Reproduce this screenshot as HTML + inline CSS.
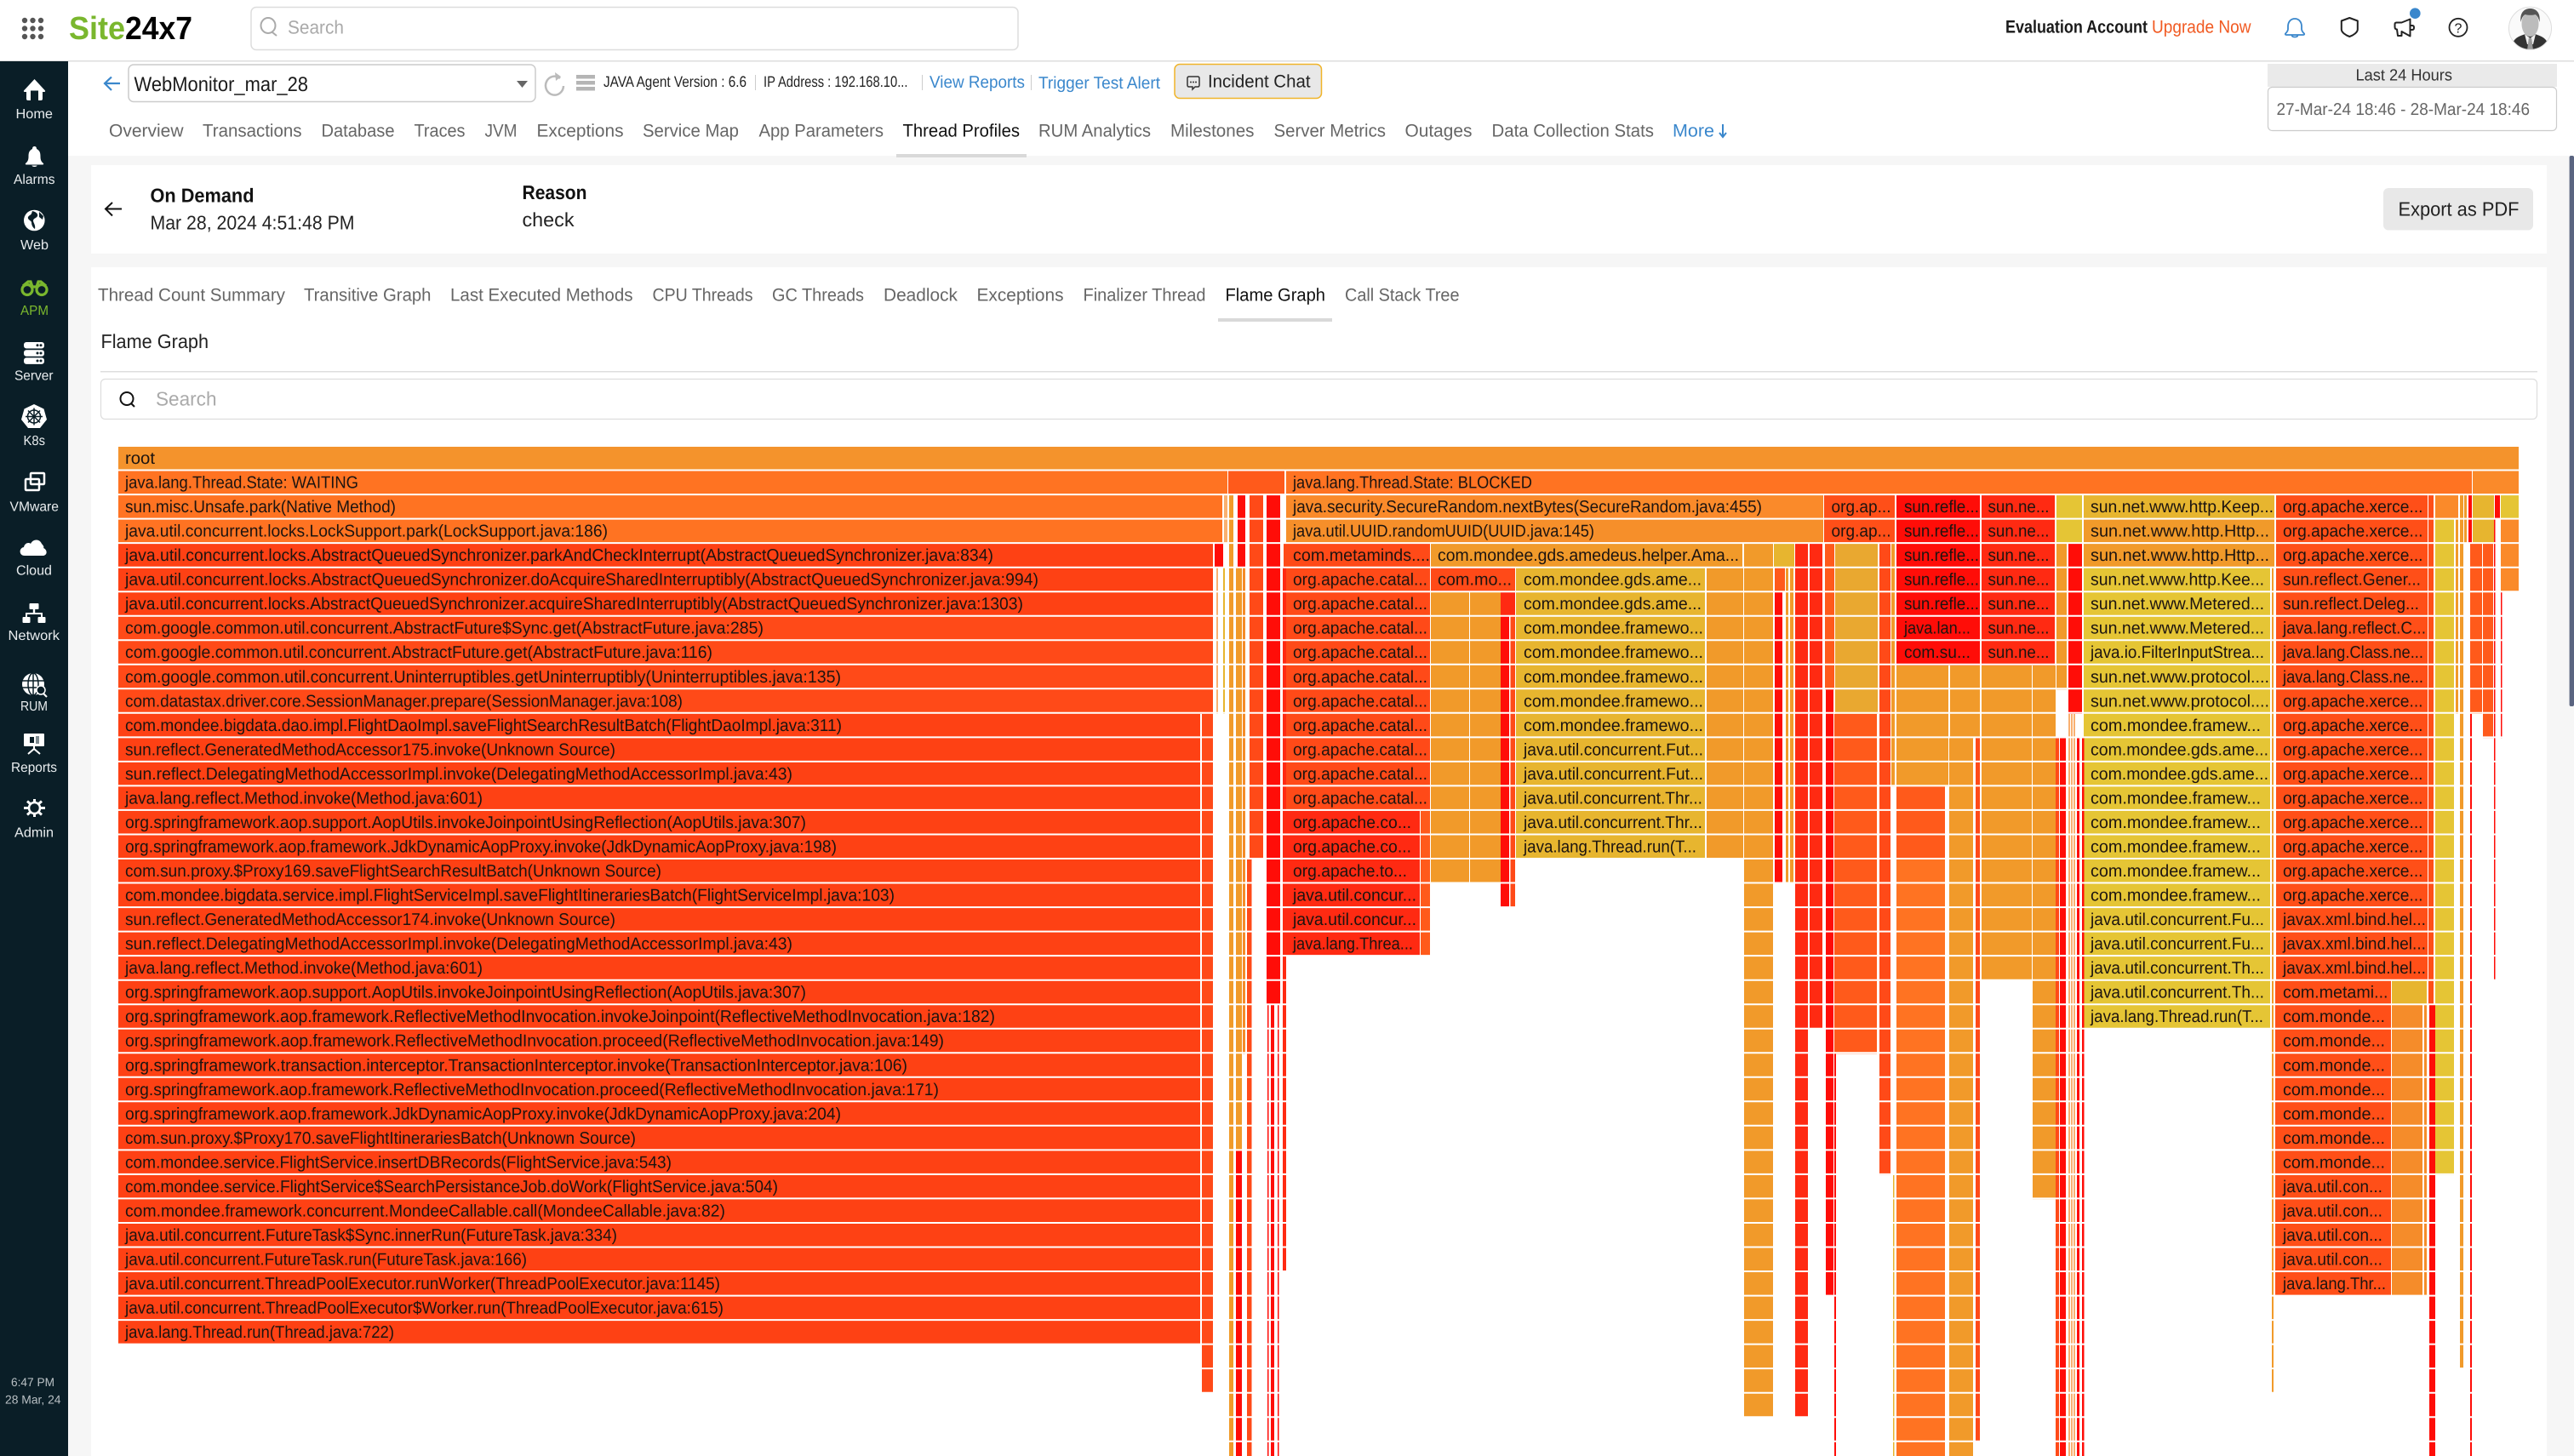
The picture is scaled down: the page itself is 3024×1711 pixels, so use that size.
<!DOCTYPE html>
<html lang="en">
<head>
<meta charset="utf-8">
<title>Site24x7 - Flame Graph</title>
<style>
html,body{margin:0;padding:0;background:#fff;width:3024px;height:1711px;overflow:hidden}
svg{display:block}
text{font-family:"Liberation Sans",sans-serif;text-rendering:geometricPrecision}
.f text{font-size:20px;fill:#1c1410}
.side text{font-size:16px;fill:#e8ecee;text-anchor:start}
.nav text{font-size:21px;fill:#666}
.tab text{font-size:21px;fill:#666}
</style>
</head>
<body>
<svg xmlns="http://www.w3.org/2000/svg" width="3024" height="1711" viewBox="0 0 3024 1711">
<!-- page background -->
<rect width="3024" height="1711" fill="#fff"/>
<rect x="80" y="183" width="2944" height="1528" fill="#f6f6f6"/>
<rect x="107" y="194" width="2885" height="104" fill="#fff"/>
<rect x="107" y="314" width="2885" height="1397" fill="#fff"/>
<rect x="3018.6" y="183" width="5.4" height="647" rx="2" fill="#5a6480"/>
<rect x="0" y="71" width="3024" height="1.5" fill="#ddd"/>

<!-- top header -->
<g fill="#555">
<circle cx="29" cy="24" r="3.2"/><circle cx="38.5" cy="24" r="3.2"/><circle cx="48" cy="24" r="3.2"/>
<circle cx="29" cy="33.5" r="3.2"/><circle cx="38.5" cy="33.5" r="3.2"/><circle cx="48" cy="33.5" r="3.2"/>
<circle cx="29" cy="43" r="3.2"/><circle cx="38.5" cy="43" r="3.2"/><circle cx="48" cy="43" r="3.2"/>
</g>
<text x="81" y="46" font-size="38" font-weight="bold" fill="#7ab72e" textLength="66" lengthAdjust="spacingAndGlyphs">Site</text>
<text x="147" y="46" font-size="38" font-weight="bold" fill="#000" textLength="79" lengthAdjust="spacingAndGlyphs">24x7</text>
<rect x="295" y="8.5" width="901" height="50" rx="6" fill="#fff" stroke="#ddd" stroke-width="1.5"/>
<g fill="none" stroke="#aaa" stroke-width="2"><ellipse cx="315" cy="30" rx="8.5" ry="9"/><path d="M320 38l5 4"/></g>
<text x="338" y="39.500" font-size="22" fill="#aaa" textLength="66" lengthAdjust="spacingAndGlyphs">Search</text>
<text x="2356" y="38.500" font-size="21" font-weight="bold" fill="#1a1a1a" textLength="167" lengthAdjust="spacingAndGlyphs">Evaluation Account</text>
<text x="2528" y="38.500" font-size="21" fill="#f15a22" textLength="116.500" lengthAdjust="spacingAndGlyphs">Upgrade Now</text>
<!-- bell -->
<path d="M2696 22c-5 0-8 4-8 9v3c0 2.500-1.500 4-3 5.500c-.5.800 0 1.500 1 1.500h20c1 0 1.500-.7 1-1.500c-1.500-1.500-3-3-3-5.500v-3c0-5-3-9-8-9z" fill="none" stroke="#3a87cc" stroke-width="1.800"/>
<path d="M2692.500 41c0 2 1.500 2.500 3.500 2.500s3.500-.5 3.500-2.500" fill="none" stroke="#3a87cc" stroke-width="1.800"/>
<!-- shield -->
<path d="M2760.300 21l9.500 3.500v10c0 3.500-5 7-9.500 8.500c-4.500-1.500-9.500-5-9.500-8.500v-10z" fill="none" stroke="#222" stroke-width="2" stroke-linejoin="round"/>
<!-- megaphone -->
<path d="M2831.500 22.500v20l-10-5.500v5h-4.500l-1-7.500q-2.500 0-2.500-3v-3q0-2 2-2h6zM2832 30h2q2 0 2 2.500t-2 2.500h-2" fill="none" stroke="#222" stroke-width="2" stroke-linejoin="round"/>
<circle cx="2837.300" cy="15.700" r="6.300" fill="#3a87cc"/>
<!-- help -->
<circle cx="2888" cy="32.300" r="10.500" fill="none" stroke="#222" stroke-width="1.800"/>
<text x="2883.500" y="38.500" font-size="16" fill="#222">?</text>
<!-- avatar -->
<clipPath id="av"><circle cx="2972.500" cy="33.300" r="25"/></clipPath>
<g clip-path="url(#av)">
<rect x="2947" y="8" width="52" height="51" fill="#fafafa"/>
<path d="M2951 59c0-11 3-15 16-19h11c13 4 16 8 16 19z" fill="#333"/>
<ellipse cx="2972.500" cy="28" rx="10" ry="15" fill="#bcbcbc"/>
<path d="M2961.500 26c-1.500-11 4-16 11-16s12.500 5 11 16c-1-5-3-8-5-9c-3 1-8 1-12 0c-2 1-4 4-5 9z" fill="#555"/>
<path d="M2966 40l6.500 5l6.500-5l-3 12h-7z" fill="#f0f0f0"/><path d="M2970.800 45h3.400l1.800 14h-7z" fill="#9a9a9a"/>
</g>
<circle cx="2972.500" cy="33.300" r="25" fill="none" stroke="#ddd"/>

<!-- sub header -->
<path d="M141 98h-17M131 90.500l-8 7.500l8 8" fill="none" stroke="#3a87cc" stroke-width="2.200"/>
<rect x="151" y="76" width="478" height="43.500" rx="6" fill="#fff" stroke="#ccc" stroke-width="1.500"/>
<text x="157.500" y="107" font-size="24" fill="#1a1a1a" textLength="204.500" lengthAdjust="spacingAndGlyphs">WebMonitor_mar_28</text>
<path d="M607 95h13l-6.500 8z" fill="#666"/>
<path d="M658 92a10.500 11 0 1 0 4 9" fill="none" stroke="#bbb" stroke-width="2.500"/><path d="M652 85l7 5l-6 5z" fill="#bbb"/>
<g fill="#b5b5b5"><rect x="677" y="88" width="22" height="4.500"/><rect x="677" y="95" width="22" height="4.500"/><rect x="677" y="102" width="22" height="4.500"/></g>
<text x="709" y="102" font-size="18" fill="#222" textLength="168" lengthAdjust="spacingAndGlyphs">JAVA Agent Version : 6.6</text>
<rect x="887" y="88" width="1" height="18" fill="#ccc"/>
<text x="897" y="102" font-size="18" fill="#222" textLength="169.500" lengthAdjust="spacingAndGlyphs">IP Address : 192.168.10...</text>
<rect x="1083" y="88" width="1" height="18" fill="#ccc"/>
<text x="1092" y="103" font-size="20" fill="#3a87cc" textLength="112" lengthAdjust="spacingAndGlyphs">View Reports</text>
<rect x="1211" y="88" width="1" height="18" fill="#ccc"/>
<text x="1220" y="104" font-size="20" fill="#3a87cc" textLength="143" lengthAdjust="spacingAndGlyphs">Trigger Test Alert</text>
<rect x="1380" y="75.500" width="172.500" height="40" rx="6" fill="#e8e8e8" stroke="#f0b429" stroke-width="1.500"/>
<path d="M1397 90h10q2 0 2 2v8q0 2-2 2h-3l-3 3v-3h-4q-2 0-2-2v-8q0-2 2-2z" fill="none" stroke="#333" stroke-width="1.500"/>
<g fill="#333"><circle cx="1399" cy="96.500" r="1"/><circle cx="1402" cy="96.500" r="1"/><circle cx="1405" cy="96.500" r="1"/></g>
<text x="1419" y="102.500" font-size="21" fill="#222" textLength="120.500" lengthAdjust="spacingAndGlyphs">Incident Chat</text>
<rect x="2664" y="75" width="340" height="27" fill="#eaeaea"/>
<text x="2767.500" y="94.500" font-size="19" fill="#333" textLength="113.500" lengthAdjust="spacingAndGlyphs">Last 24 Hours</text>
<rect x="2664.500" y="102.500" width="339" height="51" rx="5" fill="#fff" stroke="#ccc" stroke-width="1.200"/>
<text x="2674.500" y="135" font-size="20" fill="#666" textLength="297.500" lengthAdjust="spacingAndGlyphs">27-Mar-24 18:46 - 28-Mar-24 18:46</text>

<g class="nav">
<text x="128" y="160.500" textLength="87.500" lengthAdjust="spacingAndGlyphs">Overview</text>
<text x="238" y="160.500" textLength="116.500" lengthAdjust="spacingAndGlyphs">Transactions</text>
<text x="377.500" y="160.500" textLength="86" lengthAdjust="spacingAndGlyphs">Database</text>
<text x="486.500" y="160.500" textLength="60" lengthAdjust="spacingAndGlyphs">Traces</text>
<text x="569.500" y="160.500" textLength="38" lengthAdjust="spacingAndGlyphs">JVM</text>
<text x="630.500" y="160.500" textLength="102" lengthAdjust="spacingAndGlyphs">Exceptions</text>
<text x="755" y="160.500" textLength="113" lengthAdjust="spacingAndGlyphs">Service Map</text>
<text x="891.500" y="160.500" textLength="146.500" lengthAdjust="spacingAndGlyphs">App Parameters</text>
<text x="1060.500" y="160.500" textLength="137.500" lengthAdjust="spacingAndGlyphs" style="fill:#111">Thread Profiles</text>
<text x="1220" y="160.500" textLength="132" lengthAdjust="spacingAndGlyphs">RUM Analytics</text>
<text x="1375" y="160.500" textLength="98.500" lengthAdjust="spacingAndGlyphs">Milestones</text>
<text x="1496.500" y="160.500" textLength="131.500" lengthAdjust="spacingAndGlyphs">Server Metrics</text>
<text x="1650.500" y="160.500" textLength="79" lengthAdjust="spacingAndGlyphs">Outages</text>
<text x="1752.500" y="160.500" textLength="190.500" lengthAdjust="spacingAndGlyphs">Data Collection Stats</text>
<text x="1965" y="160.500" textLength="49" lengthAdjust="spacingAndGlyphs" style="fill:#3a87cc">More</text>
</g>
<path d="M2024 146v15M2020 156l4 5l4-5" fill="none" stroke="#3a87cc" stroke-width="2"/>
<rect x="1053" y="181" width="153" height="4" fill="#d9d9d9"/>

<!-- summary card -->
<path d="M143 245.500h-18M132 238l-8 7.500l8 8" fill="none" stroke="#111" stroke-width="2"/>
<text x="176.500" y="237.500" font-size="23" font-weight="bold" fill="#111" textLength="122" lengthAdjust="spacingAndGlyphs">On Demand</text>
<text x="176.500" y="269.500" font-size="23" fill="#222" textLength="240" lengthAdjust="spacingAndGlyphs">Mar 28, 2024 4:51:48 PM</text>
<text x="613.500" y="234" font-size="23" font-weight="bold" fill="#111" textLength="76" lengthAdjust="spacingAndGlyphs">Reason</text>
<text x="613.500" y="266" font-size="23" fill="#222" textLength="61" lengthAdjust="spacingAndGlyphs">check</text>
<rect x="2800" y="221" width="176" height="49.500" rx="6" fill="#e8e8e8"/>
<text x="2817.500" y="253.500" font-size="23" fill="#222" textLength="142" lengthAdjust="spacingAndGlyphs">Export as PDF</text>

<g class="tab">
<text x="115" y="353.500" textLength="220" lengthAdjust="spacingAndGlyphs">Thread Count Summary</text>
<text x="357" y="353.500" textLength="149.500" lengthAdjust="spacingAndGlyphs">Transitive Graph</text>
<text x="529" y="353.500" textLength="214.500" lengthAdjust="spacingAndGlyphs">Last Executed Methods</text>
<text x="766.500" y="353.500" textLength="118" lengthAdjust="spacingAndGlyphs">CPU Threads</text>
<text x="907" y="353.500" textLength="108" lengthAdjust="spacingAndGlyphs">GC Threads</text>
<text x="1038" y="353.500" textLength="87" lengthAdjust="spacingAndGlyphs">Deadlock</text>
<text x="1147.500" y="353.500" textLength="102" lengthAdjust="spacingAndGlyphs">Exceptions</text>
<text x="1272.500" y="353.500" textLength="144" lengthAdjust="spacingAndGlyphs">Finalizer Thread</text>
<text x="1439.500" y="353.500" textLength="117.500" lengthAdjust="spacingAndGlyphs" style="fill:#111">Flame Graph</text>
<text x="1580" y="353.500" textLength="134.500" lengthAdjust="spacingAndGlyphs">Call Stack Tree</text>
</g>
<rect x="1431" y="374" width="134" height="4" fill="#d9d9d9"/>
<text x="118.500" y="409" font-size="23" fill="#222" textLength="126.500" lengthAdjust="spacingAndGlyphs">Flame Graph</text>
<rect x="118" y="436" width="2863" height="1.500" fill="#ddd"/>
<rect x="118.500" y="445.500" width="2862" height="47" rx="5" fill="#fff" stroke="#ddd" stroke-width="1.200"/>
<g fill="none" stroke="#111" stroke-width="2"><ellipse cx="149" cy="468.500" rx="7.500" ry="7.500"/><path d="M154 474l4 4"/></g>
<text x="183" y="476.500" font-size="23" fill="#aaa" textLength="71.500" lengthAdjust="spacingAndGlyphs">Search</text>

<!-- flame blocks: y = row number, height = row count -->
<g transform="translate(0 525) scale(1 28.53)" shape-rendering="crispEdges">
<g fill="#f4932c"><rect x="139" y="0" width="2820" height="1"/></g>
<g fill="#ff7322">
<rect x="139" y="1" width="1303" height="1"/><rect x="1511" y="1" width="1393" height="1"/><rect x="139" y="2" width="1297" height="2"/><rect x="2228" y="17" width="57" height="25"/>
</g>
<g fill="#ff5a1b">
<rect x="1443" y="1" width="66" height="1"/><rect x="2228" y="14" width="57" height="3"/><rect x="1669" y="15" width="11" height="6"/><rect x="2155" y="11" width="50" height="14"/><rect x="2902" y="4" width="14" height="7"/><rect x="2917" y="4" width="12" height="8"/><rect x="2144" y="4" width="11" height="6"/><rect x="2085" y="5" width="12" height="1"/>
</g>
<g fill="#fa8a2a">
<rect x="2905" y="1" width="54" height="1"/><rect x="1511" y="2" width="631" height="1"/><rect x="2861" y="2" width="27" height="1"/><rect x="2938" y="3" width="21" height="3"/>
</g>
<rect x="1511" y="3" width="631" height="1" fill="#f68f2a"/>
<g fill="#fe4114">
<rect x="139" y="4" width="1286" height="3"/><rect x="139" y="11" width="1271" height="26"/>
</g>
<g fill="#ff4a18">
<rect x="139" y="7" width="1286" height="4"/><rect x="1412" y="11" width="13" height="26"/><rect x="1412" y="37" width="13" height="2"/>
<rect x="1508" y="4" width="172" height="11"/><rect x="1681" y="5" width="99" height="1"/><rect x="1774.500" y="7" width="5.500" height="12"/>
<rect x="1468" y="2" width="16" height="15"/><rect x="1465" y="17" width="5.500" height="25"/><rect x="2208" y="4" width="13" height="26"/><rect x="2321" y="12" width="5" height="29"/><rect x="2415" y="12" width="4" height="30"/>
</g>
<g fill="#ff4f18">
<rect x="2143" y="2" width="83" height="2"/><rect x="2674" y="2" width="178" height="20"/><rect x="2673" y="22" width="136" height="13"/><rect x="2853" y="2" width="6" height="21"/>
</g>
<g fill="#f19a2a">
<rect x="1681" y="4" width="366" height="1"/><rect x="2005" y="5" width="43" height="12"/><rect x="1681" y="6" width="45" height="12"/><rect x="1727" y="6" width="36" height="12"/><rect x="2049" y="4" width="34" height="36"/><rect x="2416" y="4" width="12" height="6"/><rect x="2228" y="9" width="61" height="5"/><rect x="2291" y="9" width="35" height="3"/><rect x="2290" y="12" width="28" height="30"/><rect x="2328" y="9" width="59" height="13"/><rect x="2388" y="9" width="27" height="22"/><rect x="2448" y="3" width="224" height="2"/><rect x="1444" y="2" width="5" height="40"/><rect x="1452" y="5" width="7" height="24"/><rect x="2890" y="2" width="4" height="36"/><rect x="2669" y="5" width="2" height="34"/><rect x="2098" y="5" width="3" height="13"/><rect x="2103" y="5" width="4" height="13"/><rect x="2885" y="3" width="3" height="8"/><rect x="2222" y="4" width="4" height="10"/><rect x="2895" y="2" width="3" height="2"/>
</g>
<g fill="#e7b52f">
<rect x="1781" y="5" width="222" height="12"/><rect x="2084" y="4" width="24" height="1"/><rect x="2810" y="22" width="41" height="1"/><rect x="2905" y="2" width="25" height="2"/><rect x="2448" y="2" width="224" height="1"/><rect x="1437" y="5" width="2" height="6"/><rect x="2224" y="30" width="1.500" height="12"/>
</g>
<rect x="2156" y="4" width="50" height="7" fill="#e9a830"/>
<g fill="#e5c535">
<rect x="2416" y="2" width="30" height="2"/><rect x="2448" y="5" width="219" height="19"/><rect x="2861" y="3" width="22" height="27"/><rect x="2938" y="2" width="21" height="1"/>
</g>
<g fill="#f58c2a">
<rect x="2810" y="23" width="36" height="12"/><rect x="2848" y="23" width="3" height="12"/><rect x="1460" y="5" width="3" height="20"/>
</g>
<g fill="#f9b070">
<rect x="1438" y="2" width="4" height="2"/><rect x="1429" y="5" width="2" height="6"/><rect x="2430" y="11" width="2" height="31"/><rect x="2433" y="11" width="2" height="31"/><rect x="2436" y="11" width="2" height="31"/>
</g>
<g fill="#ff2a12">
<rect x="1511" y="15" width="157" height="6"/><rect x="1763" y="6" width="17" height="1"/><rect x="2109" y="4" width="15" height="36"/><rect x="2126" y="4" width="15" height="20"/><rect x="2328" y="2" width="86" height="7"/><rect x="1507" y="5" width="4" height="29"/>
</g>
<g fill="#ff0d08">
<rect x="2854" y="23" width="7" height="19"/><rect x="2228" y="2" width="98" height="7"/><rect x="1454" y="2" width="9" height="3"/><rect x="1427" y="4" width="10" height="1"/><rect x="1488" y="2" width="16" height="21"/><rect x="1763" y="7" width="10" height="12"/><rect x="2085" y="6" width="9" height="12"/><rect x="2430" y="4" width="16" height="7"/><rect x="2145" y="10" width="9" height="25"/><rect x="2420" y="12" width="7" height="30"/><rect x="2440" y="12" width="3" height="30"/><rect x="2446" y="12" width="2.500" height="30"/><rect x="2902" y="11" width="2" height="31"/><rect x="2900" y="2" width="4" height="2"/><rect x="1452" y="29" width="7" height="13"/><rect x="2155" y="25" width="2" height="17"/><rect x="1489" y="23" width="1.500" height="19"/><rect x="1493" y="23" width="4" height="19"/><rect x="1501" y="23" width="1.500" height="19"/><rect x="2930" y="3" width="1.500" height="19"/><rect x="2938" y="6" width="1.500" height="6"/><rect x="2931" y="2" width="6" height="1"/>
</g>
</g>
<!-- row gaps -->
<path stroke="#fff" stroke-width="2" fill="none" d="M139 552.500H2960M139 581.100H2960M139 609.600H2960M139 638.100H2960M139 666.700H2960M139 695.200H2960M139 723.700H2960M139 752.200H2960M139 780.800H2960M139 809.300H2960M139 837.800H2960M139 866.400H2960M139 894.900H2960M139 923.400H2960M139 951.900H2960M139 980.500H2960M139 1009H2960M139 1037.500H2960M139 1066.100H2960M139 1094.600H2960M139 1123.100H2960M139 1151.700H2960M139 1180.200H2960M139 1208.700H2960M139 1237.300H2960M139 1265.800H2960M139 1294.300H2960M139 1322.800H2960M139 1351.400H2960M139 1379.900H2960M139 1408.400H2960M139 1437H2960M139 1465.500H2960M139 1494H2960M139 1522.600H2960M139 1551.100H2960M139 1579.600H2960M139 1608.100H2960M139 1636.700H2960M139 1665.200H2960M139 1693.700H2960"/>

<g class="f">
<text x="147" y="545" textLength="35" lengthAdjust="spacingAndGlyphs">root</text>
<text x="147" y="573.500" textLength="274" lengthAdjust="spacingAndGlyphs">java.lang.Thread.State: WAITING</text>
<text x="147" y="602.100" textLength="318" lengthAdjust="spacingAndGlyphs">sun.misc.Unsafe.park(Native Method)</text>
<text x="147" y="630.600" textLength="567" lengthAdjust="spacingAndGlyphs">java.util.concurrent.locks.LockSupport.park(LockSupport.java:186)</text>
<text x="147" y="659.100" textLength="1020" lengthAdjust="spacingAndGlyphs">java.util.concurrent.locks.AbstractQueuedSynchronizer.parkAndCheckInterrupt(AbstractQueuedSynchronizer.java:834)</text>
<text x="147" y="687.700" textLength="1073" lengthAdjust="spacingAndGlyphs">java.util.concurrent.locks.AbstractQueuedSynchronizer.doAcquireSharedInterruptibly(AbstractQueuedSynchronizer.java:994)</text>
<text x="147" y="716.200" textLength="1055" lengthAdjust="spacingAndGlyphs">java.util.concurrent.locks.AbstractQueuedSynchronizer.acquireSharedInterruptibly(AbstractQueuedSynchronizer.java:1303)</text>
<text x="147" y="744.700" textLength="750" lengthAdjust="spacingAndGlyphs">com.google.common.util.concurrent.AbstractFuture$Sync.get(AbstractFuture.java:285)</text>
<text x="147" y="773.200" textLength="690" lengthAdjust="spacingAndGlyphs">com.google.common.util.concurrent.AbstractFuture.get(AbstractFuture.java:116)</text>
<text x="147" y="801.800" textLength="841" lengthAdjust="spacingAndGlyphs">com.google.common.util.concurrent.Uninterruptibles.getUninterruptibly(Uninterruptibles.java:135)</text>
<text x="147" y="830.300" textLength="655" lengthAdjust="spacingAndGlyphs">com.datastax.driver.core.SessionManager.prepare(SessionManager.java:108)</text>
<text x="147" y="858.800" textLength="842" lengthAdjust="spacingAndGlyphs">com.mondee.bigdata.dao.impl.FlightDaoImpl.saveFlightSearchResultBatch(FlightDaoImpl.java:311)</text>
<text x="147" y="887.400" textLength="576" lengthAdjust="spacingAndGlyphs">sun.reflect.GeneratedMethodAccessor175.invoke(Unknown Source)</text>
<text x="147" y="915.900" textLength="784" lengthAdjust="spacingAndGlyphs">sun.reflect.DelegatingMethodAccessorImpl.invoke(DelegatingMethodAccessorImpl.java:43)</text>
<text x="147" y="944.400" textLength="420" lengthAdjust="spacingAndGlyphs">java.lang.reflect.Method.invoke(Method.java:601)</text>
<text x="147" y="972.900" textLength="800" lengthAdjust="spacingAndGlyphs">org.springframework.aop.support.AopUtils.invokeJoinpointUsingReflection(AopUtils.java:307)</text>
<text x="147" y="1001.500" textLength="836" lengthAdjust="spacingAndGlyphs">org.springframework.aop.framework.JdkDynamicAopProxy.invoke(JdkDynamicAopProxy.java:198)</text>
<text x="147" y="1030" textLength="630" lengthAdjust="spacingAndGlyphs">com.sun.proxy.$Proxy169.saveFlightSearchResultBatch(Unknown Source)</text>
<text x="147" y="1058.500" textLength="904" lengthAdjust="spacingAndGlyphs">com.mondee.bigdata.service.impl.FlightServiceImpl.saveFlightItinerariesBatch(FlightServiceImpl.java:103)</text>
<text x="147" y="1087.100" textLength="576" lengthAdjust="spacingAndGlyphs">sun.reflect.GeneratedMethodAccessor174.invoke(Unknown Source)</text>
<text x="147" y="1115.600" textLength="784" lengthAdjust="spacingAndGlyphs">sun.reflect.DelegatingMethodAccessorImpl.invoke(DelegatingMethodAccessorImpl.java:43)</text>
<text x="147" y="1144.100" textLength="420" lengthAdjust="spacingAndGlyphs">java.lang.reflect.Method.invoke(Method.java:601)</text>
<text x="147" y="1172.700" textLength="800" lengthAdjust="spacingAndGlyphs">org.springframework.aop.support.AopUtils.invokeJoinpointUsingReflection(AopUtils.java:307)</text>
<text x="147" y="1201.200" textLength="1022" lengthAdjust="spacingAndGlyphs">org.springframework.aop.framework.ReflectiveMethodInvocation.invokeJoinpoint(ReflectiveMethodInvocation.java:182)</text>
<text x="147" y="1229.700" textLength="962" lengthAdjust="spacingAndGlyphs">org.springframework.aop.framework.ReflectiveMethodInvocation.proceed(ReflectiveMethodInvocation.java:149)</text>
<text x="147" y="1258.300" textLength="919" lengthAdjust="spacingAndGlyphs">org.springframework.transaction.interceptor.TransactionInterceptor.invoke(TransactionInterceptor.java:106)</text>
<text x="147" y="1286.800" textLength="956" lengthAdjust="spacingAndGlyphs">org.springframework.aop.framework.ReflectiveMethodInvocation.proceed(ReflectiveMethodInvocation.java:171)</text>
<text x="147" y="1315.300" textLength="841" lengthAdjust="spacingAndGlyphs">org.springframework.aop.framework.JdkDynamicAopProxy.invoke(JdkDynamicAopProxy.java:204)</text>
<text x="147" y="1343.800" textLength="600" lengthAdjust="spacingAndGlyphs">com.sun.proxy.$Proxy170.saveFlightItinerariesBatch(Unknown Source)</text>
<text x="147" y="1372.400" textLength="642" lengthAdjust="spacingAndGlyphs">com.mondee.service.FlightService.insertDBRecords(FlightService.java:543)</text>
<text x="147" y="1400.900" textLength="767" lengthAdjust="spacingAndGlyphs">com.mondee.service.FlightService$SearchPersistanceJob.doWork(FlightService.java:504)</text>
<text x="147" y="1429.400" textLength="705" lengthAdjust="spacingAndGlyphs">com.mondee.framework.concurrent.MondeeCallable.call(MondeeCallable.java:82)</text>
<text x="147" y="1458" textLength="578" lengthAdjust="spacingAndGlyphs">java.util.concurrent.FutureTask$Sync.innerRun(FutureTask.java:334)</text>
<text x="147" y="1486.500" textLength="472" lengthAdjust="spacingAndGlyphs">java.util.concurrent.FutureTask.run(FutureTask.java:166)</text>
<text x="147" y="1515" textLength="699" lengthAdjust="spacingAndGlyphs">java.util.concurrent.ThreadPoolExecutor.runWorker(ThreadPoolExecutor.java:1145)</text>
<text x="147" y="1543.600" textLength="703" lengthAdjust="spacingAndGlyphs">java.util.concurrent.ThreadPoolExecutor$Worker.run(ThreadPoolExecutor.java:615)</text>
<text x="147" y="1572.100" textLength="316" lengthAdjust="spacingAndGlyphs">java.lang.Thread.run(Thread.java:722)</text>

<text x="1519" y="573.500" textLength="281" lengthAdjust="spacingAndGlyphs">java.lang.Thread.State: BLOCKED</text>
<text x="1519" y="602.100" textLength="551" lengthAdjust="spacingAndGlyphs">java.security.SecureRandom.nextBytes(SecureRandom.java:455)</text>
<text x="1519" y="630.600" textLength="354" lengthAdjust="spacingAndGlyphs">java.util.UUID.randomUUID(UUID.java:145)</text>
<text x="1519" y="659.100" textLength="161" lengthAdjust="spacingAndGlyphs">com.metaminds....</text>
<text x="1689" y="659.100" textLength="354" lengthAdjust="spacingAndGlyphs">com.mondee.gds.amedeus.helper.Ama...</text>
<text x="1519" y="687.700" textLength="158" lengthAdjust="spacingAndGlyphs">org.apache.catal...</text>
<text x="1689" y="687.700" textLength="87" lengthAdjust="spacingAndGlyphs">com.mo...</text>
<text x="1790" y="687.700" textLength="209" lengthAdjust="spacingAndGlyphs">com.mondee.gds.ame...</text>
<text x="1519" y="716.200" textLength="158" lengthAdjust="spacingAndGlyphs">org.apache.catal...</text>
<text x="1790" y="716.200" textLength="209" lengthAdjust="spacingAndGlyphs">com.mondee.gds.ame...</text>
<text x="1519" y="744.700" textLength="158" lengthAdjust="spacingAndGlyphs">org.apache.catal...</text>
<text x="1790" y="744.700" textLength="211" lengthAdjust="spacingAndGlyphs">com.mondee.framewo...</text>
<text x="1519" y="773.200" textLength="158" lengthAdjust="spacingAndGlyphs">org.apache.catal...</text>
<text x="1790" y="773.200" textLength="211" lengthAdjust="spacingAndGlyphs">com.mondee.framewo...</text>
<text x="1519" y="801.800" textLength="158" lengthAdjust="spacingAndGlyphs">org.apache.catal...</text>
<text x="1790" y="801.800" textLength="211" lengthAdjust="spacingAndGlyphs">com.mondee.framewo...</text>
<text x="1519" y="830.300" textLength="158" lengthAdjust="spacingAndGlyphs">org.apache.catal...</text>
<text x="1790" y="830.300" textLength="211" lengthAdjust="spacingAndGlyphs">com.mondee.framewo...</text>
<text x="1519" y="858.800" textLength="158" lengthAdjust="spacingAndGlyphs">org.apache.catal...</text>
<text x="1790" y="858.800" textLength="211" lengthAdjust="spacingAndGlyphs">com.mondee.framewo...</text>
<text x="1519" y="887.400" textLength="158" lengthAdjust="spacingAndGlyphs">org.apache.catal...</text>
<text x="1790" y="887.400" textLength="211" lengthAdjust="spacingAndGlyphs">java.util.concurrent.Fut...</text>
<text x="1519" y="915.900" textLength="158" lengthAdjust="spacingAndGlyphs">org.apache.catal...</text>
<text x="1790" y="915.900" textLength="211" lengthAdjust="spacingAndGlyphs">java.util.concurrent.Fut...</text>
<text x="1519" y="944.400" textLength="158" lengthAdjust="spacingAndGlyphs">org.apache.catal...</text>
<text x="1790" y="944.400" textLength="210" lengthAdjust="spacingAndGlyphs">java.util.concurrent.Thr...</text>
<text x="1519" y="972.900" textLength="139" lengthAdjust="spacingAndGlyphs">org.apache.co...</text>
<text x="1790" y="972.900" textLength="210" lengthAdjust="spacingAndGlyphs">java.util.concurrent.Thr...</text>
<text x="1519" y="1001.500" textLength="139" lengthAdjust="spacingAndGlyphs">org.apache.co...</text>
<text x="1790" y="1001.500" textLength="203" lengthAdjust="spacingAndGlyphs">java.lang.Thread.run(T...</text>
<text x="1519" y="1030" textLength="134" lengthAdjust="spacingAndGlyphs">org.apache.to...</text>
<text x="1519" y="1058.500" textLength="145" lengthAdjust="spacingAndGlyphs">java.util.concur...</text>
<text x="1519" y="1087.100" textLength="145" lengthAdjust="spacingAndGlyphs">java.util.concur...</text>
<text x="1519" y="1115.600" textLength="141" lengthAdjust="spacingAndGlyphs">java.lang.Threa...</text>

<text x="2151.500" y="602.100" textLength="70" lengthAdjust="spacingAndGlyphs">org.ap...</text>
<text x="2151.500" y="630.600" textLength="70" lengthAdjust="spacingAndGlyphs">org.ap...</text>
<text x="2237" y="602.100" textLength="88" lengthAdjust="spacingAndGlyphs">sun.refle...</text>
<text x="2237" y="630.600" textLength="88" lengthAdjust="spacingAndGlyphs">sun.refle...</text>
<text x="2237" y="659.100" textLength="88" lengthAdjust="spacingAndGlyphs">sun.refle...</text>
<text x="2237" y="687.700" textLength="88" lengthAdjust="spacingAndGlyphs">sun.refle...</text>
<text x="2237" y="716.200" textLength="88" lengthAdjust="spacingAndGlyphs">sun.refle...</text>
<text x="2237" y="744.700" textLength="78" lengthAdjust="spacingAndGlyphs">java.lan...</text>
<text x="2237" y="773.200" textLength="78" lengthAdjust="spacingAndGlyphs">com.su...</text>
<text x="2335.500" y="602.100" textLength="72" lengthAdjust="spacingAndGlyphs">sun.ne...</text>
<text x="2335.500" y="630.600" textLength="72" lengthAdjust="spacingAndGlyphs">sun.ne...</text>
<text x="2335.500" y="659.100" textLength="72" lengthAdjust="spacingAndGlyphs">sun.ne...</text>
<text x="2335.500" y="687.700" textLength="72" lengthAdjust="spacingAndGlyphs">sun.ne...</text>
<text x="2335.500" y="716.200" textLength="72" lengthAdjust="spacingAndGlyphs">sun.ne...</text>
<text x="2335.500" y="744.700" textLength="72" lengthAdjust="spacingAndGlyphs">sun.ne...</text>
<text x="2335.500" y="773.200" textLength="72" lengthAdjust="spacingAndGlyphs">sun.ne...</text>

<text x="2456" y="602.100" textLength="215" lengthAdjust="spacingAndGlyphs">sun.net.www.http.Keep...</text>
<text x="2456" y="630.600" textLength="210" lengthAdjust="spacingAndGlyphs">sun.net.www.http.Http...</text>
<text x="2456" y="659.100" textLength="210" lengthAdjust="spacingAndGlyphs">sun.net.www.http.Http...</text>
<text x="2456" y="687.700" textLength="204" lengthAdjust="spacingAndGlyphs">sun.net.www.http.Kee...</text>
<text x="2456" y="716.200" textLength="204" lengthAdjust="spacingAndGlyphs">sun.net.www.Metered...</text>
<text x="2456" y="744.700" textLength="204" lengthAdjust="spacingAndGlyphs">sun.net.www.Metered...</text>
<text x="2456" y="773.200" textLength="204" lengthAdjust="spacingAndGlyphs">java.io.FilterInputStrea...</text>
<text x="2456" y="801.800" textLength="210" lengthAdjust="spacingAndGlyphs">sun.net.www.protocol....</text>
<text x="2456" y="830.300" textLength="210" lengthAdjust="spacingAndGlyphs">sun.net.www.protocol....</text>
<text x="2456" y="858.800" textLength="200" lengthAdjust="spacingAndGlyphs">com.mondee.framew...</text>
<text x="2456" y="887.400" textLength="209" lengthAdjust="spacingAndGlyphs">com.mondee.gds.ame...</text>
<text x="2456" y="915.900" textLength="209" lengthAdjust="spacingAndGlyphs">com.mondee.gds.ame...</text>
<text x="2456" y="944.400" textLength="200" lengthAdjust="spacingAndGlyphs">com.mondee.framew...</text>
<text x="2456" y="972.900" textLength="200" lengthAdjust="spacingAndGlyphs">com.mondee.framew...</text>
<text x="2456" y="1001.500" textLength="200" lengthAdjust="spacingAndGlyphs">com.mondee.framew...</text>
<text x="2456" y="1030" textLength="200" lengthAdjust="spacingAndGlyphs">com.mondee.framew...</text>
<text x="2456" y="1058.500" textLength="200" lengthAdjust="spacingAndGlyphs">com.mondee.framew...</text>
<text x="2456" y="1087.100" textLength="204" lengthAdjust="spacingAndGlyphs">java.util.concurrent.Fu...</text>
<text x="2456" y="1115.600" textLength="204" lengthAdjust="spacingAndGlyphs">java.util.concurrent.Fu...</text>
<text x="2456" y="1144.100" textLength="204" lengthAdjust="spacingAndGlyphs">java.util.concurrent.Th...</text>
<text x="2456" y="1172.700" textLength="204" lengthAdjust="spacingAndGlyphs">java.util.concurrent.Th...</text>
<text x="2456" y="1201.200" textLength="203" lengthAdjust="spacingAndGlyphs">java.lang.Thread.run(T...</text>

<text x="2682" y="602.100" textLength="164.500" lengthAdjust="spacingAndGlyphs">org.apache.xerce...</text>
<text x="2682" y="630.600" textLength="164.500" lengthAdjust="spacingAndGlyphs">org.apache.xerce...</text>
<text x="2682" y="659.100" textLength="164.500" lengthAdjust="spacingAndGlyphs">org.apache.xerce...</text>
<text x="2682" y="687.700" textLength="162" lengthAdjust="spacingAndGlyphs">sun.reflect.Gener...</text>
<text x="2682" y="716.200" textLength="160" lengthAdjust="spacingAndGlyphs">sun.reflect.Deleg...</text>
<text x="2682" y="744.700" textLength="168" lengthAdjust="spacingAndGlyphs">java.lang.reflect.C...</text>
<text x="2682" y="773.200" textLength="165" lengthAdjust="spacingAndGlyphs">java.lang.Class.ne...</text>
<text x="2682" y="801.800" textLength="165" lengthAdjust="spacingAndGlyphs">java.lang.Class.ne...</text>
<text x="2682" y="830.300" textLength="164.500" lengthAdjust="spacingAndGlyphs">org.apache.xerce...</text>
<text x="2682" y="858.800" textLength="164.500" lengthAdjust="spacingAndGlyphs">org.apache.xerce...</text>
<text x="2682" y="887.400" textLength="164.500" lengthAdjust="spacingAndGlyphs">org.apache.xerce...</text>
<text x="2682" y="915.900" textLength="164.500" lengthAdjust="spacingAndGlyphs">org.apache.xerce...</text>
<text x="2682" y="944.400" textLength="164.500" lengthAdjust="spacingAndGlyphs">org.apache.xerce...</text>
<text x="2682" y="972.900" textLength="164.500" lengthAdjust="spacingAndGlyphs">org.apache.xerce...</text>
<text x="2682" y="1001.500" textLength="164.500" lengthAdjust="spacingAndGlyphs">org.apache.xerce...</text>
<text x="2682" y="1030" textLength="164.500" lengthAdjust="spacingAndGlyphs">org.apache.xerce...</text>
<text x="2682" y="1058.500" textLength="164.500" lengthAdjust="spacingAndGlyphs">org.apache.xerce...</text>
<text x="2682" y="1087.100" textLength="168" lengthAdjust="spacingAndGlyphs">javax.xml.bind.hel...</text>
<text x="2682" y="1115.600" textLength="168" lengthAdjust="spacingAndGlyphs">javax.xml.bind.hel...</text>
<text x="2682" y="1144.100" textLength="168" lengthAdjust="spacingAndGlyphs">javax.xml.bind.hel...</text>
<text x="2682" y="1172.700" textLength="123.500" lengthAdjust="spacingAndGlyphs">com.metami...</text>
<text x="2682" y="1201.200" textLength="120" lengthAdjust="spacingAndGlyphs">com.monde...</text>
<text x="2682" y="1229.700" textLength="120" lengthAdjust="spacingAndGlyphs">com.monde...</text>
<text x="2682" y="1258.300" textLength="120" lengthAdjust="spacingAndGlyphs">com.monde...</text>
<text x="2682" y="1286.800" textLength="120" lengthAdjust="spacingAndGlyphs">com.monde...</text>
<text x="2682" y="1315.300" textLength="120" lengthAdjust="spacingAndGlyphs">com.monde...</text>
<text x="2682" y="1343.800" textLength="120" lengthAdjust="spacingAndGlyphs">com.monde...</text>
<text x="2682" y="1372.400" textLength="120" lengthAdjust="spacingAndGlyphs">com.monde...</text>
<text x="2682" y="1400.900" textLength="117" lengthAdjust="spacingAndGlyphs">java.util.con...</text>
<text x="2682" y="1429.400" textLength="117" lengthAdjust="spacingAndGlyphs">java.util.con...</text>
<text x="2682" y="1458" textLength="117" lengthAdjust="spacingAndGlyphs">java.util.con...</text>
<text x="2682" y="1486.500" textLength="117" lengthAdjust="spacingAndGlyphs">java.util.con...</text>
<text x="2682" y="1515" textLength="121" lengthAdjust="spacingAndGlyphs">java.lang.Thr...</text>
</g>

<!-- sidebar -->
<rect x="0" y="72" width="80" height="1639" fill="#0a1e27"/>
<g class="side">
<!-- home -->
<path d="M40.500 93L53 106.500q.5 1.500-1 1.500h-2v8q0 2-2 2h-3v-11.500h-9V118h-3q-2 0-2-2v-8h-2q-1.500 0-1-1.500z" fill="#fff"/>
<text x="18.500" y="139" textLength="43.500" lengthAdjust="spacingAndGlyphs">Home</text>
<!-- alarms -->
<path d="M40.500 172c-1.500 0-2.500 1-2.500 3c-4 2-4.500 5-4.500 9c0 4-1 6-3.500 8c-.5 1 0 1.500 1 1.500h19c1 0 1.500-.5 1-1.500c-2.500-2-3.500-4-3.500-8c0-4-.5-7-4.500-9c0-2-1-3-2.500-3z" fill="#fff"/><path d="M37.500 194.500h6c0 1-1.500 1.500-3 1.500s-3-.5-3-1.500z" fill="#fff"/>
<text x="16" y="216" textLength="48.500" lengthAdjust="spacingAndGlyphs">Alarms</text>
<!-- web -->
<circle cx="40.300" cy="259" r="12.300" fill="#fff"/><path d="M38 248c4 1 7 3 6 6c-2 3-4 2-5 5c0 3 3 5 2 10c-3-2-4-5-4-8c-1-2-5-3-4-6c1-2 3-2 4-4z" fill="#0a1e27"/><path d="M46 249l5 5l-1 4l-4-3z" fill="#0a1e27"/>
<text x="24" y="293" textLength="33" lengthAdjust="spacingAndGlyphs">Web</text>
<!-- apm -->
<g fill="none" stroke="#7ab72e" stroke-width="3.200"><circle cx="32" cy="340.500" r="6"/><circle cx="49" cy="340.500" r="6"/><path d="M27 336l6-5h3l2 6h5l2-6h3l6 5"/></g>
<text x="24" y="370" textLength="33" lengthAdjust="spacingAndGlyphs" style="fill:#7ab72e">APM</text>
<!-- server -->
<g fill="#fff"><rect x="28" y="402" width="24" height="7.500" rx="3"/><rect x="28" y="411.200" width="24" height="7.500" rx="3"/><rect x="28" y="420.400" width="24" height="7.500" rx="3"/></g>
<g fill="#0a1e27"><circle cx="44" cy="405.700" r="1.500"/><circle cx="48" cy="405.700" r="1.500"/><circle cx="44" cy="415" r="1.500"/><circle cx="48" cy="415" r="1.500"/><circle cx="44" cy="424" r="1.500"/><circle cx="48" cy="424" r="1.500"/></g>
<!-- k8s -->
<path d="M40 475l11.500 5.500l3.500 12.500l-8 10h-14l-8-10l3.500-12.500z" fill="#fff"/>
<g fill="none" stroke="#0a1e27" stroke-width="1.500"><circle cx="40" cy="489.500" r="7.500"/><path d="M40 479.500v20M30 489.500h20M33 482.500l14 14M47 482.500l-14 14"/></g>
<text x="17" y="446.500" textLength="45.500" lengthAdjust="spacingAndGlyphs">Server</text>
<text x="27.500" y="523" textLength="25.500" lengthAdjust="spacingAndGlyphs">K8s</text>
<!-- vmware -->
<g fill="none" stroke="#fff" stroke-width="2.500"><rect x="30" y="563" width="16" height="13" rx="1"/><rect x="36" y="556" width="16" height="13" rx="1"/></g>
<text x="11.500" y="600.500" textLength="57.500" lengthAdjust="spacingAndGlyphs">VMware</text>
<!-- cloud -->
<path d="M29 653c-7 0-7-9-1-10c1-5 6-6 8-4c2-5 10-7 13 0c2 2 3 4 2 5c5 2 5 9-1 9z" fill="#fff"/>
<text x="19" y="675.500" textLength="42" lengthAdjust="spacingAndGlyphs">Cloud</text>
<!-- network -->
<g fill="#fff"><rect x="34.500" y="709" width="11" height="7" rx="1"/><rect x="38.800" y="716" width="2.400" height="5"/><rect x="30" y="720" width="20" height="2"/><rect x="30" y="722" width="2" height="3"/><rect x="48" y="722" width="2" height="3"/><rect x="26.500" y="725" width="9" height="7" rx="1"/><rect x="44.500" y="725" width="9" height="7" rx="1"/></g>
<text x="9.500" y="752" textLength="60.500" lengthAdjust="spacingAndGlyphs">Network</text>
<!-- rum -->
<circle cx="39" cy="804" r="13" fill="#fff"/><g fill="none" stroke="#0a1e27" stroke-width="1.500"><ellipse cx="39" cy="804" rx="6" ry="13"/><path d="M26 800h26M26 808h26M39 791v26"/></g>
<circle cx="48" cy="811" r="5" fill="#0a1e27" stroke="#fff" stroke-width="1.500"/><path d="M51 815l4 4" stroke="#fff" stroke-width="2"/>
<text x="24" y="835" textLength="32" lengthAdjust="spacingAndGlyphs">RUM</text>
<!-- reports -->
<rect x="28" y="862" width="24" height="15" rx="1" fill="#fff"/><rect x="35" y="866" width="5" height="7" fill="#0a1e27"/><rect x="42" y="865" width="4" height="9" fill="#7d8a90"/>
<path d="M40 877v3M33 886l7-6l7 6" fill="none" stroke="#fff" stroke-width="2"/>
<text x="13" y="907" textLength="54" lengthAdjust="spacingAndGlyphs">Reports</text>
<!-- admin -->
<g fill="none" stroke="#fff"><circle cx="40.500" cy="949.500" r="6.500" stroke-width="2.500"/><path stroke-width="3" d="M40.500 939v4M40.500 956v4M28 949.500h6M47 949.500h6M32 941.500l4 3.500M45 954l4 3.500M49 941.500l-4 3.500M36 954l-4 3.500"/></g>
<text x="17" y="983.500" textLength="46" lengthAdjust="spacingAndGlyphs">Admin</text>
<text x="13" y="1629" textLength="51" lengthAdjust="spacingAndGlyphs" style="font-size:14px;fill:#b9c0c4">6:47 PM</text>
<text x="6" y="1649.500" textLength="65.500" lengthAdjust="spacingAndGlyphs" style="font-size:14px;fill:#b9c0c4">28 Mar, 24</text>
</g>
</svg>
</body>
</html>
